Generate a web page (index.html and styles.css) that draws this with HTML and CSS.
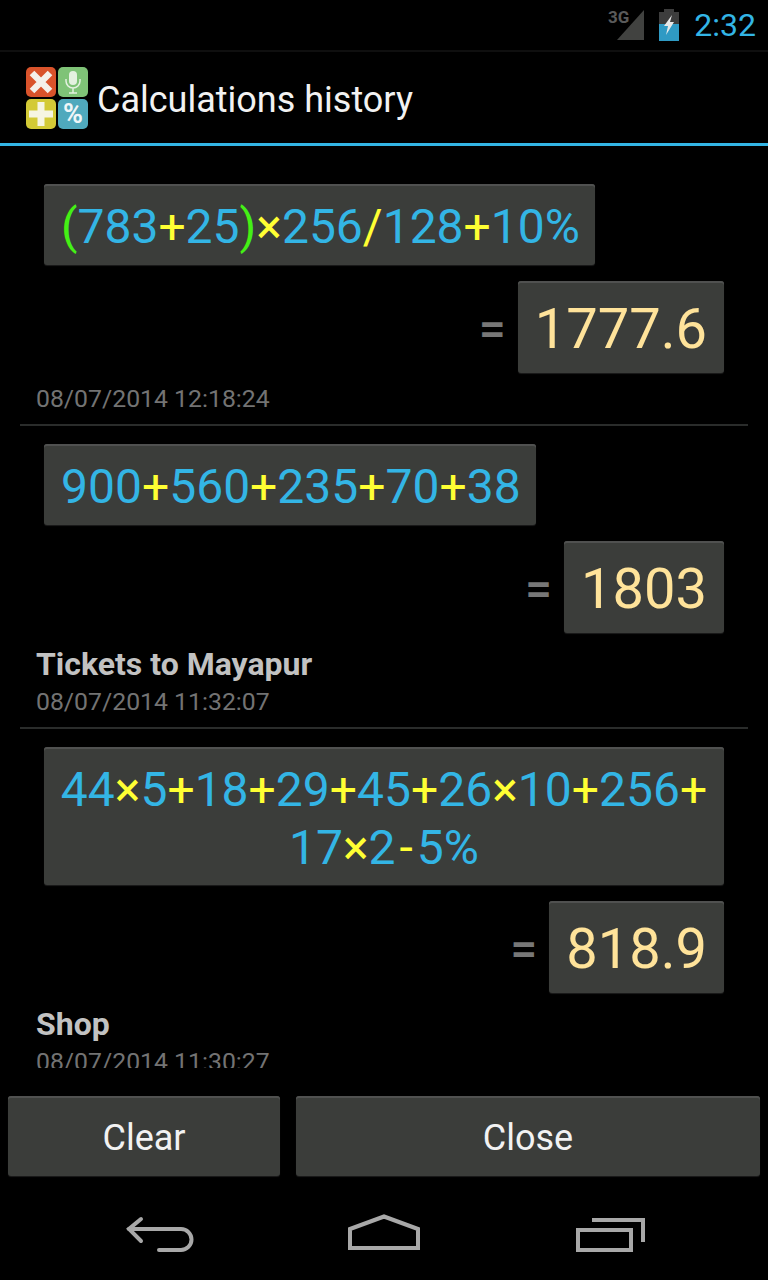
FILE: index.html
```html
<!DOCTYPE html>
<html lang="en">
<head>
  <meta charset="UTF-8" />
  <title>Calculations history</title>
  <link rel="stylesheet" href="styles.css">
</head>
<body>
  <div class="screen">
    <div class="statusBar">
      <svg class="signal" width="38" height="34" viewBox="0 0 38 34">
        <polygon points="37,2 37,32 10,32" fill="#414240"/>
        <text x="1" y="15" class="signalText">3G</text>
      </svg>
      <svg class="battery" width="24" height="32" viewBox="0 0 24 32">
        <rect x="7" y="0" width="10" height="4" fill="#3d3d3d"/>
        <rect x="2" y="3" width="20" height="12" fill="#3d3d3d"/>
        <rect x="2" y="15" width="20" height="17" fill="#2f9ac4"/>
        <polygon points="15,6 7,17 11,17 9,26 17,13 13,13" fill="#e8e8e8"/>
      </svg>
      <span class="clock">2:32</span>
    </div>

    <div class="actionBar">
      <svg class="appIcon" width="64" height="64" viewBox="0 0 64 64">
        <rect x="1" y="1" width="30" height="30" rx="5" fill="#d9532b"/>
        <path d="M7 7 L25 25 M25 7 L7 25" stroke="#f4f0ea" stroke-width="6.5"/>
        <rect x="33" y="1" width="30" height="30" rx="5" fill="#7fc377"/>
        <rect x="44" y="5" width="8" height="14" rx="4" fill="#e4f1e0"/>
        <path d="M41 13 V15 A7 7 0 0 0 55 15 V13 M48 22 V27 M44 27 H52" stroke="#e4f1e0" stroke-width="1.5" fill="none"/>
        <rect x="1" y="33" width="30" height="30" rx="5" fill="#d3ca36"/>
        <path d="M16 36 V60 M4 48 H28" stroke="#f6f5e2" stroke-width="7"/>
        <rect x="33" y="33" width="30" height="30" rx="5" fill="#4fa9bd"/>
        <text x="48" y="57" class="iconPercent">%</text>
      </svg>
      <span class="title">Calculations history</span>
    </div>

    <div class="history">
      <div class="item">
        <div class="exprRow">
          <div class="box expr"><span class="paren">(</span>783<span class="op">+</span>25<span class="paren">)</span><span class="op">×</span>256<span class="op">/</span>128<span class="op">+</span>10%</div>
        </div>
        <div class="resultRow">
          <span class="equals">=</span>
          <div class="box result">1777.6</div>
        </div>
        <div class="date noName">08/07/2014 12:18:24</div>
      </div>
      <div class="item">
        <div class="exprRow">
          <div class="box expr">900<span class="op">+</span>560<span class="op">+</span>235<span class="op">+</span>70<span class="op">+</span>38</div>
        </div>
        <div class="resultRow">
          <span class="equals">=</span>
          <div class="box result">1803</div>
        </div>
        <div class="name">Tickets to Mayapur</div>
        <div class="date">08/07/2014 11:32:07</div>
      </div>
      <div class="item">
        <div class="exprRow">
          <div class="box expr wide">44<span class="op">×</span>5<span class="op">+</span>18<span class="op">+</span>29<span class="op">+</span>45<span class="op">+</span>26<span class="op">×</span>10<span class="op">+</span>256<span class="op">+</span><br>17<span class="op">×</span>2<span class="op hyphen">-</span>5%</div>
        </div>
        <div class="resultRow">
          <span class="equals">=</span>
          <div class="box result">818.9</div>
        </div>
        <div class="name">Shop</div>
        <div class="date">08/07/2014 11:30:27</div>
      </div>
    </div>

    <div class="buttons">
      <div class="box btn btnClear">Clear</div>
      <div class="box btn btnClose">Close</div>
    </div>

    <div class="navBar">
      <svg width="72" height="40" viewBox="0 0 72 40" fill="none" stroke="#a8a8a8" stroke-width="4" stroke-linecap="round">
        <path d="M17 7 L5 17 L17 29"/>
        <path d="M5 17 H57 A10.5 10.5 0 0 1 57 38 H35"/>
      </svg>
      <svg width="80" height="40" viewBox="0 0 80 40" fill="none" stroke="#a8a8a8" stroke-width="4">
        <path d="M40 4.5 L74 17 V36 H6 V17 Z"/>
      </svg>
      <svg width="76" height="40" viewBox="0 0 76 40" fill="none" stroke="#a8a8a8" stroke-width="4">
        <path d="M20 8 H71 V30"/>
        <rect x="6" y="18" width="53" height="20"/>
      </svg>
    </div>
  </div>
</body>
</html>
```

FILE: styles.css
```css
html, body {
  margin: 0;
  padding: 0;
  background: #000;
}
.screen {
  width: 768px;
  height: 1280px;
  display: flex;
  flex-direction: column;
  overflow: hidden;
  font-family: Roboto, "Liberation Sans", sans-serif;
  color: #fff;
  background: #000;
}

/* status bar */
.statusBar {
  height: 52px;
  flex: none;
  box-sizing: border-box;
  border-bottom: 2px solid #0f0f0f;
  display: flex;
  align-items: center;
  justify-content: flex-end;
  padding-right: 12px;
}
.signal {
  margin-right: 12px;
}
.signalText {
  font-size: 17px;
  font-weight: 700;
  fill: #5a5a5a;
}
.battery {
  margin-right: 13px;
}
.clock {
  font-size: 32px;
  color: #33b5e5;
}

/* action bar */
.actionBar {
  height: 94px;
  flex: none;
  box-sizing: border-box;
  border-bottom: 3px solid #33b5e5;
  display: flex;
  align-items: center;
  padding-left: 25px;
}
.appIcon {
  margin-right: 8px;
}
.iconPercent {
  font-size: 27px;
  font-weight: 700;
  text-anchor: middle;
  fill: #eef6f8;
}
.title {
  font-size: 36px;
  color: #f2f2f2;
  padding-top: 5px;
}

/* list */
.history {
  height: 922px;
  flex: none;
  overflow: hidden;
  box-sizing: border-box;
  padding: 38px 20px 0;
}
.item {
  padding-bottom: 9px;
  border-bottom: 2px solid #2a2c2b;
  margin-bottom: 18px;
}
.box {
  background: #3b3d3a;
  border-radius: 3px;
  box-shadow: inset 0 2px 0 #505150, 0 1px 1px #1c1c1c;
}
.exprRow {
  display: flex;
  padding: 0 24px;
}
.expr {
  box-sizing: border-box;
  padding: 14px 15px 0 17px;
  height: 81px;
  font-size: 48px;
  line-height: 58px;
  color: #33b5e5;
  text-align: center;
}
.expr.wide {
  width: 100%;
  height: 138px;
  padding-left: 16px;
  padding-right: 16px;
}
.op {
  color: #ffff33;
}
.hyphen {
  padding: 0 4px;
}
.paren {
  color: #44f015;
}
.resultRow {
  display: flex;
  justify-content: flex-end;
  align-items: center;
  margin-top: 16px;
  padding-right: 24px;
}
.equals {
  font-size: 48px;
  font-weight: 500;
  color: #777;
  margin-right: 12px;
  padding-top: 2px;
}
.result {
  height: 92px;
  box-sizing: border-box;
  padding: 4px 17px 0;
  font-size: 56px;
  line-height: 88px;
  color: #ffe39a;
}
.name {
  margin: 13px 0 0 16px;
  font-size: 32px;
  line-height: 36px;
  font-weight: 700;
  color: #c2c2c2;
}
.date {
  margin: 4px 0 0 16px;
  font-size: 24.8px;
  line-height: 32px;
  color: #737373;
}
.date.noName {
  margin-top: 10px;
}

/* bottom buttons */
.buttons {
  height: 80px;
  flex: none;
  margin-top: 28px;
  padding: 0 8px;
  display: flex;
  gap: 16px;
}
.btn {
  box-sizing: border-box;
  padding-top: 3px;
  display: flex;
  align-items: center;
  justify-content: center;
  font-size: 36px;
  color: #f2f2f2;
}
.btnClear {
  width: 272px;
}
.btnClose {
  flex: 1;
}

/* nav bar */
.navBar {
  flex: 1;
  display: flex;
  justify-content: space-between;
  align-items: flex-start;
  padding: 36px 120px 0 124px;
}
```
